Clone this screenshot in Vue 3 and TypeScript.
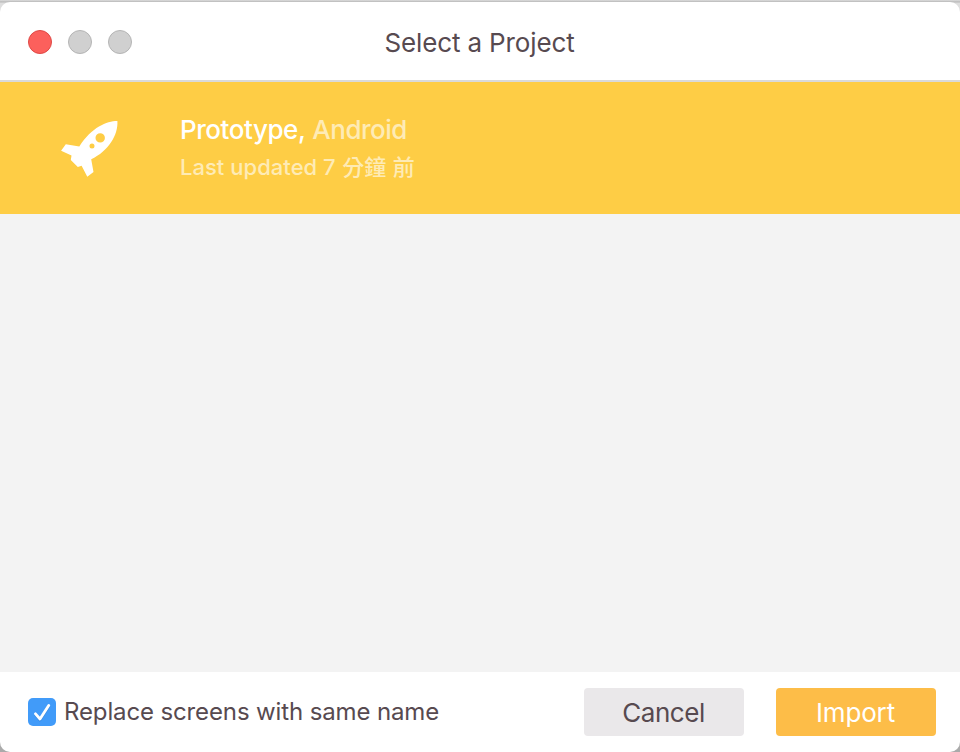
<script setup lang="ts">
import { ref } from 'vue'

interface Project {
  name: string
  platform: string
  updated: string
}

const projects: Project[] = [
  { name: 'Prototype,', platform: 'Android', updated: 'Last updated 7' },
]
const selected = ref(0)
const replaceScreens = ref(true)
</script>

<template>
  <div class="backdrop">
    <main class="window">
      <header class="titlebar">
        <div class="lights">
          <span class="light close"></span>
          <span class="light"></span>
          <span class="light"></span>
        </div>
        <h1 class="title">Select a Project</h1>
      </header>

      <section class="list">
        <article
          v-for="(project, i) in projects"
          :key="project.name"
          class="project"
          :class="{ selected: selected === i }"
          @click="selected = i"
        >
          <svg class="rocket" viewBox="0 0 60 60">
            <path
              fill="#fff"
              fill-rule="evenodd"
              d="M57.4 1C47 .9 32 7 19.300 26.500L5.800 24.300L1.100 30.800L11.500 35.500L10.800 40L17.800 47L21.600 45.700L27.300 56.800L33.500 52.100L31.200 39.300C48.500 31 58.300 15 57.400 1ZM40.200 13.200a4.700 4.700 0 1 1 0 9.400a4.700 4.700 0 1 1 0-9.400ZM32 23.500a2.500 2.500 0 1 1 0 5a2.500 2.500 0 1 1 0-5Z"
            />
          </svg>
          <div class="info">
            <div class="heading">
              <span class="name">{{ project.name }}</span>
              <span class="platform">{{ project.platform }}</span>
            </div>
            <div class="updated">
              <span class="latin">{{ project.updated }}</span>
              <span class="cjk" lang="zh-Hant">分鐘</span>
              <span class="cjk" lang="zh-Hant">前</span>
            </div>
          </div>
        </article>
      </section>

      <footer class="footer">
        <label class="option">
          <input v-model="replaceScreens" class="native" type="checkbox" />
          <span class="box">
            <svg v-if="replaceScreens" viewBox="0 0 28 28">
              <path d="M7.500 15.800L12 21L20.700 7.500" />
            </svg>
          </span>
          <span class="option-text">Replace screens with same name</span>
        </label>
        <button class="button cancel" type="button"><span>Cancel</span></button>
        <button class="button import" type="button"><span>Import</span></button>
      </footer>
    </main>
  </div>
</template>

<style>
body {
  margin: 0;
}
</style>

<style scoped>
.backdrop {
  box-sizing: border-box;
  height: 752px;
  padding-top: 2px;
  overflow: hidden;
  background: linear-gradient(#dedede 0, #b8b8b8 2px, #dedede 3px, #dedede 50%, #aaa 98%);
  font-family: Inter, 'Noto Sans CJK TC', sans-serif;
  color: #574a50;
}
.window {
  display: flex;
  flex-direction: column;
  height: 750px;
  border-radius: 10px;
  overflow: hidden;
  background: #fff;
}
.titlebar {
  box-sizing: border-box;
  display: grid;
  grid-template-columns: 1fr auto 1fr;
  align-items: center;
  height: 80px;
  flex: none;
  padding-left: 28px;
  padding-right: 29px;
  border-bottom: 2px solid #dadada;
}
.lights {
  display: flex;
  gap: 16px;
  padding-top: 2px;
}
.light {
  box-sizing: border-box;
  width: 24px;
  height: 24px;
  border: 1px solid #b5b5b5;
  border-radius: 50%;
  background: #d0d0d0;
}
.light.close {
  border-color: #df4946;
  background: #fc605c;
}
.title {
  margin: 0;
  padding-top: 3px;
  font-size: 26px;
  line-height: 32px;
  font-weight: 430;
  letter-spacing: -0.13px;
  white-space: nowrap;
}
.list {
  flex: 1;
  background: #f3f3f3;
}
.project {
  box-sizing: border-box;
  display: flex;
  height: 132px;
  padding: 32px 60px 0;
}
.project.selected {
  background: #fecd45;
}
.rocket {
  width: 60px;
  height: 60px;
  margin-top: 6px;
}
.info {
  margin-left: 60px;
  white-space: nowrap;
}
.heading {
  display: flex;
  gap: 7px;
  font-size: 26px;
  line-height: 32px;
}
.name {
  font-weight: 500;
  letter-spacing: -0.45px;
  color: #fff;
}
.platform {
  font-weight: 450;
  letter-spacing: -0.5px;
  color: #feebb5;
}
.updated {
  display: flex;
  gap: 6.5px;
  margin-top: 5px;
  font-size: 22px;
  line-height: 32px;
  font-weight: 450;
  color: #feebb5;
}
.latin {
  letter-spacing: 0.03px;
}
.cjk {
  font-weight: 500;
}
.footer {
  box-sizing: border-box;
  display: flex;
  align-items: center;
  height: 80px;
  flex: none;
  padding: 0 24px 0 28px;
}
.option {
  display: flex;
  align-items: center;
  gap: 8px;
  flex: 1;
  font-size: 24px;
  line-height: 32px;
  font-weight: 430;
  letter-spacing: -0.13px;
  white-space: nowrap;
}
.native {
  appearance: none;
  width: 0;
  height: 0;
  margin: 0 -8px 0 0;
}
.box {
  width: 28px;
  height: 28px;
  border-radius: 5px;
  background: #419bf9;
}
.box svg {
  display: block;
  fill: none;
  stroke: #fff;
  stroke-width: 2.8;
  stroke-linecap: round;
  stroke-linejoin: round;
  filter: drop-shadow(0 1px 0.5px #1c6fc466);
}
.button {
  width: 160px;
  height: 48px;
  padding: 2px 1px 0 0;
  border: 0;
  border-radius: 4px;
  font: 430 26px/32px Inter, sans-serif;
  letter-spacing: -0.45px;
  color: #574a50;
  background: #eae8ea;
}
.button.import {
  margin-left: 32px;
  letter-spacing: -0.15px;
  color: #fff;
  background: #fdbd48;
}
</style>
